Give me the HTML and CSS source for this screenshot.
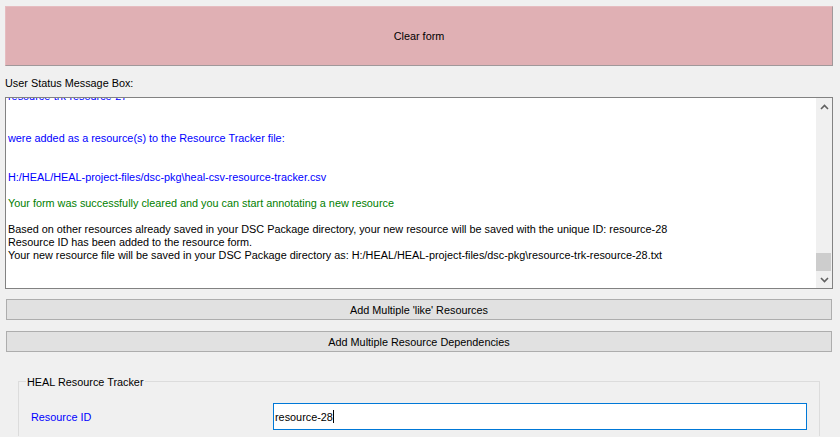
FILE: index.html
```html
<!DOCTYPE html>
<html>
<head>
<meta charset="utf-8">
<link rel="stylesheet" href="styles.css">
</head>
<body>
<div class="page">
  <button class="clear-btn">Clear form</button>
  <div class="status-label">User Status Message Box:</div>
  <div class="status-box">
    <div class="status-text">
      <div class="content">
        <div class="ln blue top-line">resource-trk-resource-27</div>
        <div class="ln">&nbsp;</div>
        <div class="ln">&nbsp;</div>
        <div class="ln blue">were added as a resource(s) to the Resource Tracker file:</div>
        <div class="ln">&nbsp;</div>
        <div class="ln">&nbsp;</div>
        <div class="ln blue">H:/HEAL/HEAL-project-files/dsc-pkg\heal-csv-resource-tracker.csv</div>
        <div class="ln">&nbsp;</div>
        <div class="ln green">Your form was successfully cleared and you can start annotating a new resource</div>
        <div class="ln">&nbsp;</div>
        <div class="ln">Based on other resources already saved in your DSC Package directory, your new resource will be saved with the unique ID: resource-28</div>
        <div class="ln">Resource ID has been added to the resource form.</div>
        <div class="ln">Your new resource file will be saved in your DSC Package directory as: H:/HEAL/HEAL-project-files/dsc-pkg\resource-trk-resource-28.txt</div>
      </div>
    </div>
    <div class="scrollbar">
      <div class="arrow">
        <svg width="9" height="6" viewBox="0 0 9 6"><path d="M1 5 L4.5 1.5 L8 5" fill="none" stroke="#606060" stroke-width="1.6"/></svg>
      </div>
      <div class="track"></div>
      <div class="thumb"></div>
      <div class="arrow">
        <svg width="9" height="6" viewBox="0 0 9 6"><path d="M1 1 L4.5 4.5 L8 1" fill="none" stroke="#606060" stroke-width="1.6"/></svg>
      </div>
    </div>
  </div>
  <button class="wide-btn first">Add Multiple 'like' Resources</button>
  <button class="wide-btn">Add Multiple Resource Dependencies</button>
  <div class="group">
    <div class="group-title">HEAL Resource Tracker</div>
    <div class="row">
      <div class="row-label">Resource ID</div>
      <div class="input"><span>resource-28</span><span class="caret"></span></div>
    </div>
  </div>
</div>
</body>
</html>
```

FILE: styles.css
```css
* { box-sizing: border-box; }
html, body {
  margin: 0;
  padding: 0;
  background: #f0f0f0;
  width: 840px;
  height: 437px;
  overflow: hidden;
}
body {
  font-family: "Liberation Sans", Arial, sans-serif;
  font-size: 10.85px;
  color: #000;
}
.page {
  padding: 6px 7px 0 5px;
  display: flex;
  flex-direction: column;
}
button {
  font-family: inherit;
  font-size: 10.85px;
  color: #000;
  padding: 0;
  margin: 0;
}
.clear-btn {
  height: 60px;
  width: 828px;
  background: #e0b0b4;
  border: 1px solid;
  border-color: #e6bcc0 #a0989a #a0989a #e6bcc0;
}
.status-label {
  margin-top: 11px;
  height: 20px;
  line-height: 13px;
}
.status-box {
  width: 828px;
  height: 192px;
  border: 1px solid #828282;
  background: #fff;
  display: flex;
}
.status-text {
  flex: 1;
  overflow: hidden;
  padding-left: 2px;
}
.content {
  margin-top: -8px;
}
.ln {
  line-height: 13px;
  height: 13px;
  white-space: nowrap;
}
.top-line { margin-bottom: 3px; }
.blue { color: #0000ff; }
.green { color: #008000; }
.scrollbar {
  width: 16px;
  background: #f0f0f0;
  display: flex;
  flex-direction: column;
}
.arrow {
  height: 17px;
  display: flex;
  align-items: center;
  justify-content: center;
}
.track { flex: 1; }
.thumb {
  height: 18px;
  background: #cdcdcd;
  margin: 0 1px 0 0;
}
.wide-btn {
  margin-left: 1px;
  width: 826px;
  height: 21px;
  background: #e1e1e1;
  border: 1px solid #adadad;
}
.wide-btn.first { margin-top: 10px; }
.wide-btn + .wide-btn { margin-top: 11px; }
.group {
  margin-top: 29px;
  margin-left: 13px;
  width: 802px;
  height: 55px;
  border: 1px solid #dcdcdc;
  border-bottom: none;
  position: relative;
  padding: 21px 0 0 12px;
}
.group-title {
  position: absolute;
  top: -7px;
  left: 7px;
  background: #f0f0f0;
  padding: 0 1px;
  line-height: 14px;
}
.row {
  display: flex;
  align-items: center;
}
.row-label {
  width: 242px;
  color: #0000ff;
  padding-top: 1px;
}
.input {
  width: 534px;
  height: 27px;
  background: #fff;
  border: 1px solid #0078d7;
  display: flex;
  align-items: center;
  padding-left: 1px;
}
.caret {
  display: inline-block;
  width: 1px;
  height: 13px;
  background: #000;
}
```
